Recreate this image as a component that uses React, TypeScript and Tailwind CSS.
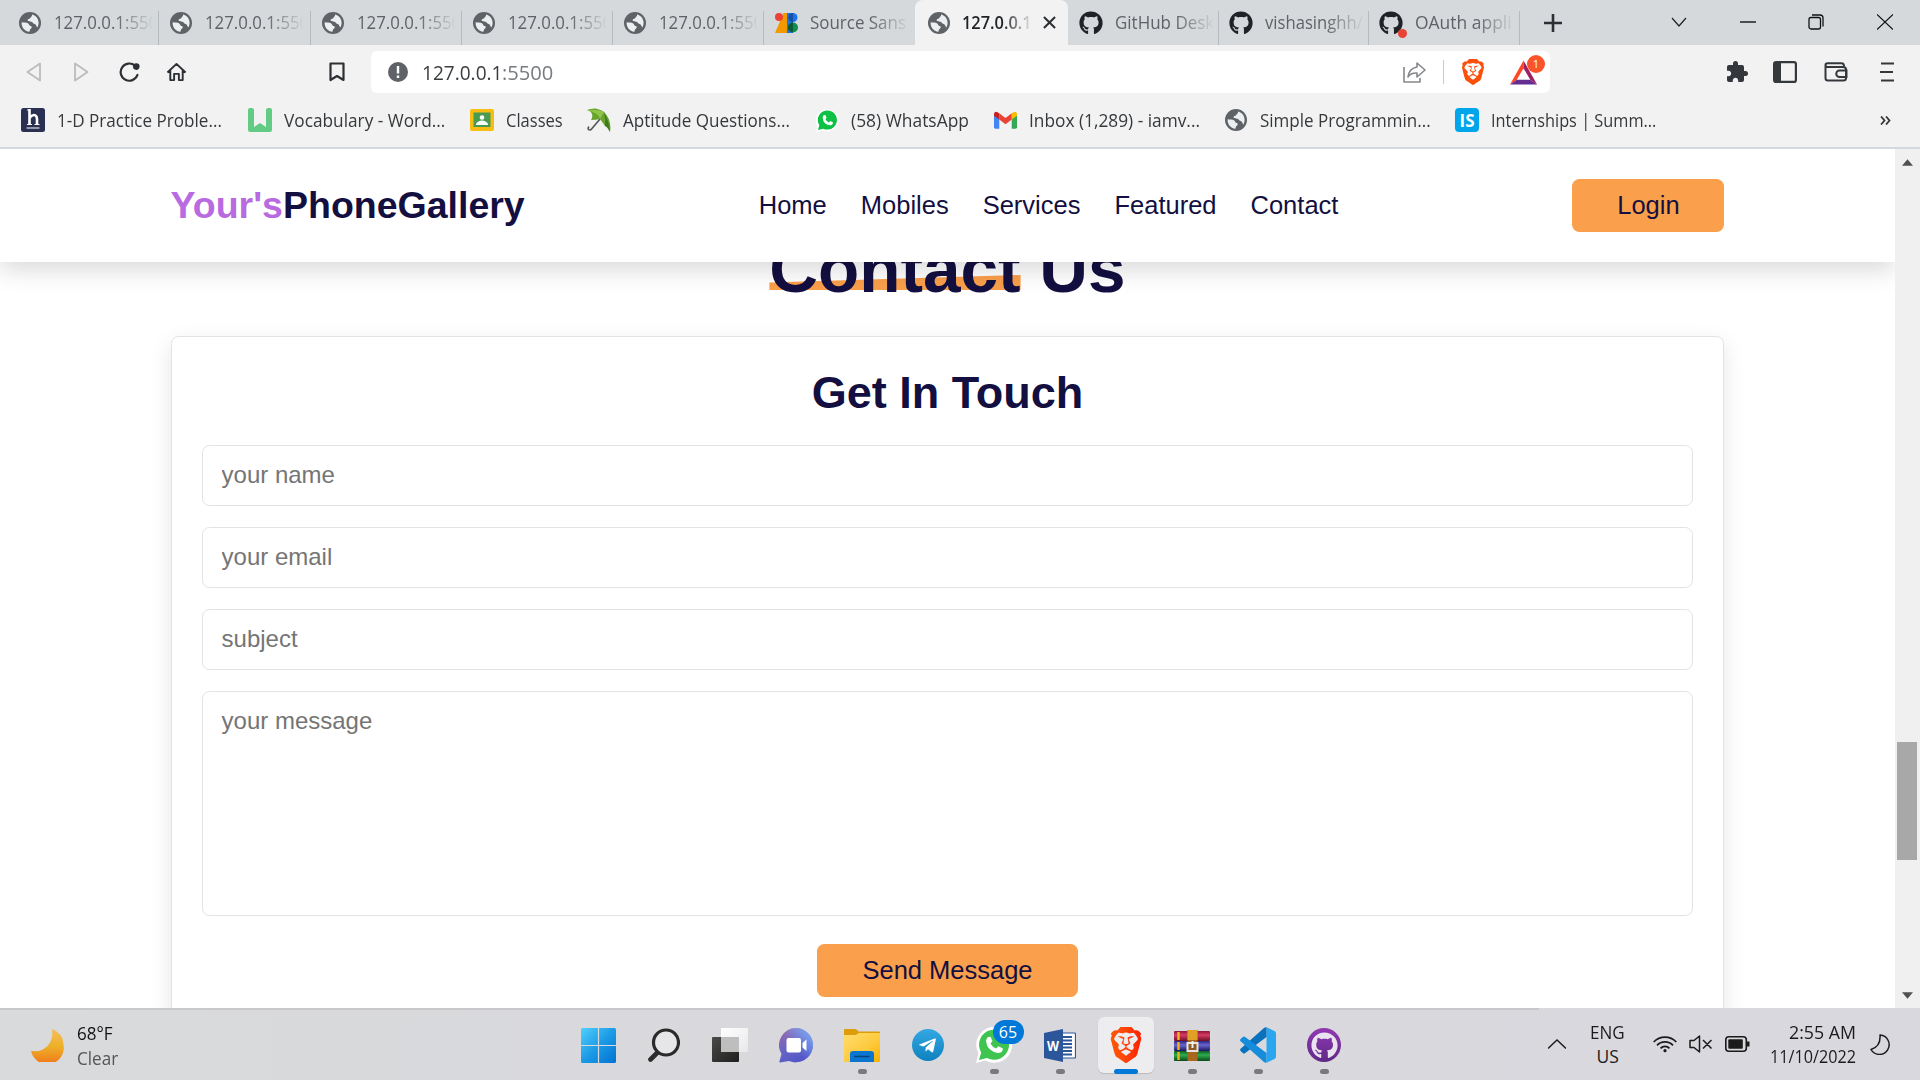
import { useLayoutEffect, useRef, useState } from "react";
import type { ReactNode } from "react";
import { FaGithub, FaTelegramPlane } from "react-icons/fa";
import { SiBrave } from "react-icons/si";
import { MdExtension } from "react-icons/md";

/** Single-line label that is condensed or widened to an exact width. */
function Fit({ text, width, className = "" }: { text: string; width: number; className?: string }) {
  const ref = useRef<HTMLSpanElement>(null);
  const [scale, setScale] = useState(1);
  useLayoutEffect(() => {
    if (ref.current) setScale(width / ref.current.offsetWidth);
  }, [width, text]);
  return (
    <span className="block shrink-0 whitespace-nowrap" style={{ width }}>
      <span ref={ref} className={`inline-block origin-left ${className}`} style={{ transform: `scaleX(${scale})` }}>
        {text}
      </span>
    </span>
  );
}

function Globe() {
  return (
    <svg viewBox="0 0 22 22" className="size-[22px] shrink-0">
      <circle cx="11" cy="11" r="11" fill="#5f6368" />
      <path d="M2.6 10.2C4.5 10.8 7.6 10 9.3 11.4C10.4 12.6 10 13.6 11.7 14C13.4 14.3 12.8 16.3 11.5 17C10.5 17.7 11 19 10.4 19.8C5.5 19.3 2.3 15 2.6 10.2Z" fill="#eceeef" />
      <path d="M13.2 2.6C17 3.6 19.6 7 19.6 11C19.5 13 19 14.4 18.2 15.6C17.4 14.3 17.2 12.5 15.6 12C13.8 11.6 14.2 10.4 12.3 9.8C10.4 9.3 8.7 9.8 8.6 8.3C8.6 6.8 10.4 7.2 11 6.2C11.7 5.2 12.9 5 13.2 2.6Z" fill="#eceeef" />
    </svg>
  );
}

function GoogleFonts() {
  return (
    <svg viewBox="0 0 23 22" className="h-[22px] w-[23px] shrink-0">
      <path d="M8.500 1H13V21H0Z" fill="#f29900" />
      <circle cx="4" cy="5" r="4" fill="#ea4335" />
      <path d="M12 1H18V21H12Z" fill="#1a73e8" />
      <circle cx="18" cy="5.500" r="4.500" fill="#1a73e8" />
      <circle cx="18" cy="15.500" r="5" fill="#0d904f" />
      <path d="M18 1V10A4.500 4.500 0 0 1 18 1Z" fill="#174ea6" />
      <path d="M18 10.500V20.500A5 5 0 0 1 18 10.500Z" fill="#0d5a3a" />
    </svg>
  );
}

function GitHubDot() {
  return (
    <span className="relative shrink-0">
      <FaGithub className="size-6 text-[#1f2328]" />
      <span className="absolute -right-1 -bottom-[3px] size-[9px] rounded-full bg-[#ea4335]" />
    </span>
  );
}

type TabData = { icon: ReactNode; label: string; w: number; active?: boolean; noLine?: boolean; late?: boolean };

const local: TabData = { icon: <Globe />, label: "127.0.0.1:5500", w: 114 };
const github = <FaGithub className="size-6 shrink-0 text-[#1f2328]" />;
const tabs: TabData[] = [
  local,
  local,
  local,
  local,
  local,
  { icon: <GoogleFonts />, label: "Source Sans", w: 96, noLine: true },
  { icon: <Globe />, label: "127.0.0.1", w: 70, active: true, noLine: true },
  { icon: github, label: "GitHub Desk", w: 99, late: true },
  { icon: github, label: "vishasinghh/", w: 98, late: true },
  { icon: <GitHubDot />, label: "OAuth appli", w: 97, late: true },
];

function Tab({ t }: { t: TabData }) {
  if (t.active) {
    return (
      <div className="flex h-full w-[153px] shrink-0 items-center rounded-t-lg bg-[#f2f2f2] pl-[13px]">
        {t.icon}
        <div className="ml-3 w-[68px] overflow-hidden [mask-image:linear-gradient(to_right,#000_60%,rgba(0,0,0,0.1))]">
          <Fit text={t.label} width={t.w} className="text-[18px] font-semibold text-[#1f2328]" />
        </div>
        <svg viewBox="0 0 14 14" className="ml-[13px] size-[13px]" stroke="#2c2f33" strokeWidth="2.2">
          <path d="M1 1L13 13M13 1L1 13" />
        </svg>
      </div>
    );
  }
  return (
    <div className={`relative flex h-full shrink-0 items-center pl-[11px] ${t.late ? "w-[150.3px]" : "w-[151.3px]"}`}>
      <div className="flex w-[24px] justify-center">{t.icon}</div>
      <div className="ml-3 w-[98px] overflow-hidden [mask-image:linear-gradient(to_right,#000_62%,rgba(0,0,0,0.05))]">
        <Fit text={t.label} width={t.w} className="text-[18px] text-[#5f6367]" />
      </div>
      {!t.noLine && <span className="absolute -right-px bottom-0 h-[34px] w-px bg-[#b5babe]" />}
    </div>
  );
}

function TabStrip() {
  return (
    <div className="flex h-[45px] bg-[#d5d9dc] pl-[7px]">
      {tabs.map((t, i) => (
        <Tab key={i} t={t} />
      ))}
      <div className="flex flex-1 items-center pl-[25px]">
        <svg viewBox="0 0 18 18" className="size-[18px]" stroke="#2c2f33" strokeWidth="2.6">
          <path d="M9 0V18M0 9H18" />
        </svg>
      </div>
      <div className="flex items-center pr-[27px] pb-[2px]">
        <svg viewBox="0 0 16 12" className="mr-[53px] h-3 w-4" fill="none" stroke="#222" strokeWidth="1.2">
          <path d="M1 2L8 10L15 2" />
        </svg>
        <svg viewBox="0 0 16 16" className="mr-[52px] size-4" stroke="#111" strokeWidth="1.4">
          <path d="M0 8H16" />
        </svg>
        <svg viewBox="0 0 16 16" className="mr-[53px] size-4" fill="none" stroke="#111" strokeWidth="1.3">
          <rect x="1" y="3.5" width="11.5" height="11.5" rx="2" />
          <path d="M4 1H12A3 3 0 0 1 15 4V12.500" />
        </svg>
        <svg viewBox="0 0 16 16" className="size-4" stroke="#111" strokeWidth="1.2">
          <path d="M0 0.500L16 15.500M16 0.500L0 15.500" />
        </svg>
      </div>
    </div>
  );
}

function Toolbar() {
  return (
    <div className="flex h-[54px] items-center bg-[#f2f2f2]">
      <svg viewBox="0 0 16 20" className="ml-[26px] h-5 w-4" fill="none" stroke="#b9bbbd" strokeWidth="1.8" strokeLinejoin="round">
        <path d="M14 1.500V18.500L1.500 10Z" />
      </svg>
      <svg viewBox="0 0 16 20" className="ml-[31px] h-5 w-4" fill="none" stroke="#b9bbbd" strokeWidth="1.8" strokeLinejoin="round">
        <path d="M2 1.500V18.500L14.500 10Z" />
      </svg>
      <svg viewBox="0 0 22 20" className="ml-[30px] h-5 w-[22px]" fill="none" stroke="#2c2f33" strokeWidth="2.2" strokeLinecap="round">
        <path d="M18.400 13A8.600 8.600 0 1 1 16 3.700" />
        <circle cx="17.300" cy="4.600" r="2.200" fill="#2c2f33" />
      </svg>
      <svg viewBox="0 0 22 20" className="ml-[25px] h-5 w-[21px]" fill="none" stroke="#2c2f33" strokeWidth="2" strokeLinejoin="round">
        <path d="M1.500 10.500L11 1.500L20.500 10.500M4.500 8.500V18.500H8.500V12H13.500V18.500H17.500V8.500" />
      </svg>
      <svg viewBox="0 0 16 20" className="ml-[142px] h-5 w-4" fill="none" stroke="#2c2f33" strokeWidth="2.200" strokeLinejoin="round">
        <path d="M1.500 1.500H14.500V18L8 14L1.500 18Z" />
      </svg>
      <div className="ml-[26px] flex h-[42px] w-[1179px] items-center rounded-md bg-white pl-[17px]">
        <svg viewBox="0 0 20 20" className="size-5">
          <circle cx="10" cy="10" r="10" fill="#5f6368" />
          <path d="M10 4V11.500M10 13.500V16" stroke="#fff" strokeWidth="2.400" />
        </svg>
        <span className="ml-[14px] flex">
          <Fit text="127.0.0.1" width={80} className="text-[20.5px] text-[#3a3d40]" />
          <Fit text=":5500" width={51} className="text-[20.5px] text-[#777b7f]" />
        </span>
        <svg viewBox="0 0 23 21" className="ml-auto h-[21px] w-[23px]" fill="none" stroke="#85888b" strokeWidth="1.600" strokeLinejoin="round">
          <path d="M1 5V20H17V16" />
          <path d="M14 1L22 8L14 15V11Q8 10.500 5 15Q6 6.500 14 5Z" />
        </svg>
        <span className="ml-[17px] h-6 w-px bg-[#c9cbcd]" />
        <span className="ml-4 flex rounded-[10px] bg-white">
          <SiBrave className="h-[28px] w-[26px] text-[#fb4f0a]" />
        </span>
        <span className="relative mr-[13px] ml-[24px] h-7 w-[27px]">
          <svg viewBox="0 0 28 25" className="mt-[2px] h-[25px] w-[27px]">
            <path d="M14 0L0 25L7 20L14 8Z" fill="#ff4724" />
            <path d="M14 0L28 25L21 20L14 8Z" fill="#9e1f63" />
            <path d="M0 25H28L21 20H7Z" fill="#662d91" />
          </svg>
          <span className="absolute -top-[3px] -right-[8px] flex size-[18px] items-center justify-center rounded-full bg-[#fb542b] text-[11px] text-white">1</span>
        </span>
      </div>
      <MdExtension className="ml-[175px] size-[24px] text-[#34383c]" />
      <svg viewBox="0 0 24 22" className="ml-[24px] h-[22px] w-6">
        <rect x="1.100" y="1.100" width="21.800" height="19.800" rx="2" fill="none" stroke="#34383c" strokeWidth="2.200" />
        <rect x="1" y="1" width="7" height="20" fill="#34383c" />
      </svg>
      <svg viewBox="0 0 24 20" className="ml-[27px] h-5 w-6" fill="none" stroke="#34383c" strokeWidth="2">
        <path d="M1.500 3V16Q1.500 18.500 4 18.500H19.500Q22 18.500 22 16V7.500Q22 5 19.500 5H3.500Q1.500 5 1.500 3Q1.500 1.200 3.500 1.200H17.500Q20 1.200 20 4" />
        <path d="M22.500 8.500H15.500A3.200 3.200 0 0 0 15.500 15H22.500Z" />
      </svg>
      <svg viewBox="0 0 14 20" className="ml-[32px] h-5 w-[14px]" stroke="#34383c" strokeWidth="2.200">
        <path d="M1 1.500H14M0 10H13M1 18.500H14" />
      </svg>
    </div>
  );
}

const bookmarks: { icon: ReactNode; label: string; w: number; slot: string }[] = [
  {
    icon: (
      <svg viewBox="0 0 24 24" className="size-6" fill="none" stroke="#fff">
        <rect width="24" height="24" rx="2.500" fill="#2a3052" stroke="none" />
        <path d="M8.500 1V16M9 9.500Q12 6 14.500 7.500Q16 8.500 16 11V16" strokeWidth="2.600" />
        <path d="M6 2H9M6 16.500H11M13.500 16.500H18.500M5.500 20H18.500" strokeWidth="1.200" />
      </svg>
    ),
    label: "1-D Practice Proble...",
    w: 165,
    slot: "w-[227px]",
  },
  {
    icon: (
      <svg viewBox="0 0 24 24" className="size-6">
        <path d="M0 2Q0 0 2 0H4Q6 0 6 2V19L12 15L18 19V2Q18 0 20 0H22Q24 0 24 2V22Q24 24 22 24H2Q0 24 0 22Z" fill="#62cc84" />
      </svg>
    ),
    label: "Vocabulary - Word...",
    w: 161,
    slot: "w-[222px]",
  },
  {
    icon: (
      <svg viewBox="0 0 24 22" className="h-[22px] w-6">
        <rect width="24" height="22" rx="2" fill="#f8bd12" />
        <rect x="3.500" y="3.500" width="17" height="14.500" fill="#4a9b52" />
        <circle cx="12" cy="8.500" r="2.300" fill="#fff" />
        <path d="M6 15Q8 11.500 12 11.500Q16 11.500 18 15V16H6Z" fill="#fff" />
      </svg>
    ),
    label: "Classes",
    w: 57,
    slot: "w-[117px]",
  },
  {
    icon: (
      <svg viewBox="0 0 24 24" className="size-6">
        <path d="M13 11L5 20.500Q3 23 1.500 21.500Q.5 20 2 18.500" stroke="#555" strokeWidth="1.600" fill="none" />
        <path d="M0 2Q9-2 17 4Q25 12 23 24Q20 18 18 18L13 11Q9 12 4 12Q6 9 5 6Q4 3 0 2Z" fill="#68a32c" />
        <path d="M0 2Q11 1 17 4L13 11Q12 5 0 2Z" fill="#8ec549" />
        <path d="M17 4Q22 13 23 24Q20 18 18 18Q19 11 17 4Z" fill="#3f7a1c" />
      </svg>
    ),
    label: "Aptitude Questions...",
    w: 167,
    slot: "w-[228px]",
  },
  {
    icon: (
      <svg viewBox="0 0 24 24" className="size-[23px]">
        <path d="M0 24L1.500 18A12 11.500 0 1 1 7 22.500Z" fill="#fff" />
        <path d="M2 22L3.500 17A10 10 0 1 1 7.500 20.500Z" fill="#0cc143" />
        <path d="M8 6.500L9.800 6.300L11 9.200L9.800 10.800Q11 13 13.300 14L15 12.500L17.800 14Q17.500 17 14.500 17Q7.500 16 7 9Q7 7.500 8 6.500Z" fill="#fff" />
      </svg>
    ),
    label: "(58) WhatsApp",
    w: 118,
    slot: "w-[178px]",
  },
  {
    icon: (
      <svg viewBox="0 0 24 18" className="h-[18px] w-[23px]">
        <path d="M0 2V16.500Q0 18 1.500 18H5.500V6Z" fill="#4285f4" />
        <path d="M24 2V16.500Q24 18 22.500 18H18.500V6Z" fill="#34a853" />
        <path d="M5.500 2L12 7L18.500 2V8.500L12 13.500L5.500 8.500Z" fill="#ea4335" />
        <path d="M0 2.500Q1-1.500 5.500 2V8.500L0 4.500Z" fill="#c5221f" />
        <path d="M24 2.500Q23-1.500 18.500 2V8.500L24 4.500Z" fill="#fbbc04" />
      </svg>
    ),
    label: "Inbox (1,289) - iamv...",
    w: 171,
    slot: "w-[231px]",
  },
  { icon: <Globe />, label: "Simple Programmin...", w: 171, slot: "w-[231px]" },
  {
    icon: <span className="flex size-6 items-center justify-center rounded-[4px] bg-[#00a5ec] text-[17px] leading-none font-bold text-white">IS</span>,
    label: "Internships | Summ...",
    w: 165,
    slot: "w-[210px]",
  },
];

function Bookmarks() {
  return (
    <div className="flex h-[50px] items-center border-b-2 border-[#d3d9de] bg-[#f2f2f2] pr-[29px] pb-[6px] pl-[21px]">
      {bookmarks.map((b) => (
        <div key={b.label} className={`flex shrink-0 items-center ${b.slot}`}>
          <span className="mr-3 flex w-6 shrink-0 justify-center">{b.icon}</span>
          <Fit text={b.label} width={b.w} className="text-[18px] text-[#36393c]" />
        </div>
      ))}
      <svg viewBox="0 0 11 9" className="ml-auto h-[9px] w-[11px]" fill="none" stroke="#34383c" strokeWidth="1.800">
        <path d="M1 .5L4.500 4.500L1 8.500M6 .5L9.500 4.500L6 8.500" />
      </svg>
    </div>
  );
}

const fieldClass =
  "block w-full resize-none rounded-[7.5px] border border-[#e3e3e4] bg-white px-[19px] text-[24px] text-[#140f40] outline-none placeholder:text-[#757575] placeholder:opacity-100";

function Page() {
  return (
    <div className="flex h-[859px] overflow-hidden bg-white font-['Liberation_Sans',sans-serif] text-[#130f40]">
      <main className="flex w-[1895px] flex-col overflow-hidden">
        <header className="relative z-10 flex h-[113px] shrink-0 items-center justify-between bg-white px-[9%] shadow-[0_7.5px_22.5px_rgba(0,0,0,0.15)]">
          <div className="text-[37.5px] leading-none font-bold">
            <span className="text-[#b86ae0]">Your's</span>PhoneGallery
          </div>
          <nav className="flex gap-[34px] text-[25.5px]">
            {["Home", "Mobiles", "Services", "Featured", "Contact"].map((n) => (
              <a key={n}>{n}</a>
            ))}
          </nav>
          <button className="h-[53px] w-[152px] rounded-[7.5px] bg-[#fa9f4b] text-[25.5px]">Login</button>
        </header>
        <section className="flex grow flex-col px-[9%]">
          <h1 className="relative z-0 -mt-8 h-[106px] shrink-0 text-center text-[67.5px] leading-[78px] font-bold">
            <span className="relative inline-block">
              Contact
              <span className="absolute bottom-[18px] left-0 -z-10 h-[15px] w-full bg-[#fa9f4b] [clip-path:polygon(0_50%,100%_0,100%_100%,0_100%)]" />
            </span>{" "}
            Us
          </h1>
          <form className="-mb-24 h-[780px] shrink-0 rounded-[7.5px] border border-[#e3e3e4] bg-white px-[30px] shadow-[0_7.5px_22.5px_rgba(0,0,0,0.1)]">
            <h3 className="mt-[30px] mb-[26px] text-center text-[45px] leading-[52px] font-bold">Get In Touch</h3>
            <div className="flex flex-col gap-[21px]">
              <input className={`h-[61px] pb-[2px] ${fieldClass}`} placeholder="your name" />
              <input className={`h-[61px] pb-[2px] ${fieldClass}`} placeholder="your email" />
              <input className={`h-[61px] pb-[2px] ${fieldClass}`} placeholder="subject" />
              <textarea className={`h-[225px] pt-[15px] leading-[28px] ${fieldClass}`} placeholder="your message" />
            </div>
            <button type="button" className="mx-auto mt-7 block h-[53px] w-[261px] rounded-[7.5px] bg-[#fa9f4b] text-[25.5px]">
              Send Message
            </button>
          </form>
        </section>
      </main>
      <div className="flex w-[25px] flex-col items-center bg-[#f0f0f0]">
        <svg viewBox="0 0 12 7" className="mt-[10px] h-[7px] w-[11px]">
          <path d="M6 0L12 7H0Z" fill="#505050" />
        </svg>
        <div className="mt-[576px] mr-px h-[118px] w-5 bg-[#a8a8a8]" />
        <svg viewBox="0 0 12 7" className="mt-auto mb-[9px] h-[7px] w-[11px]">
          <path d="M6 7L12 0H0Z" fill="#505050" />
        </svg>
      </div>
    </div>
  );
}

function WindowsIcon() {
  return (
    <svg viewBox="0 0 35 35" className="size-[35px]">
      <defs>
        <linearGradient id="win" x1="0" y1="0" x2="35" y2="35" gradientUnits="userSpaceOnUse">
          <stop stopColor="#50d0fd" />
          <stop offset=".5" stopColor="#1c9be6" />
          <stop offset="1" stopColor="#0072d3" />
        </linearGradient>
      </defs>
      <path d="M1.500 0H16.900V16.900H0V1.500Q0 0 1.500 0ZM18.100 0H33.500Q35 0 35 1.500V16.900H18.100ZM0 18.100H16.900V35H1.500Q0 35 0 33.500ZM18.100 18.100H35V33.500Q35 35 33.500 35H18.100Z" fill="url(#win)" />
    </svg>
  );
}

function SearchIcon() {
  return (
    <svg viewBox="0 0 32 34" className="h-[34px] w-8" fill="none" stroke="#2a2a2a">
      <path d="M10.500 23.500L2.500 31.500" strokeWidth="4.600" strokeLinecap="round" />
      <circle cx="18" cy="14.500" r="12.500" strokeWidth="3.200" fill="#e6e6e8" />
    </svg>
  );
}

function TaskViewIcon() {
  return (
    <svg viewBox="0 0 36 34" className="h-[34px] w-9">
      <defs>
        <linearGradient id="tv" x1="0" y1="0" x2="1" y2="1">
          <stop stopColor="#4a4a48" />
          <stop offset="1" stopColor="#1e1e1e" />
        </linearGradient>
        <linearGradient id="tw" x1="0" y1="0" x2="1" y2="1">
          <stop stopColor="#fff" />
          <stop offset="1" stopColor="#e8e8ea" />
        </linearGradient>
      </defs>
      <rect x="9" y="0" width="27" height="24" rx="1" fill="url(#tw)" />
      <rect x="0" y="9" width="27" height="25" rx="1" fill="url(#tv)" />
      <rect x="9" y="9" width="18" height="15" fill="#bebebe" />
    </svg>
  );
}

function ChatIcon() {
  return (
    <svg viewBox="0 0 35 35" className="size-[35px]">
      <defs>
        <linearGradient id="chat" x1=".1" y1="0" x2=".7" y2="1">
          <stop stopColor="#9a6ba8" />
          <stop offset=".55" stopColor="#6463c8" />
          <stop offset="1" stopColor="#5153c6" />
        </linearGradient>
        <linearGradient id="chat2" x1="1" y1="0" x2=".4" y2=".5">
          <stop stopColor="#7db4ff" />
          <stop offset="1" stopColor="#7db4ff" stopOpacity="0" />
        </linearGradient>
      </defs>
      <path d="M17.500 0A17.200 17.200 0 1 1 10 33L1 34.500Q0 34.500 .5 33L2.500 26A17.200 17.200 0 0 1 17.500 0Z" fill="url(#chat)" />
      <path d="M17.500 0A17.200 17.200 0 1 1 10 33L1 34.500Q0 34.500 .5 33L2.500 26A17.200 17.200 0 0 1 17.500 0Z" fill="url(#chat2)" />
      <rect x="7.500" y="10" width="14.500" height="14.500" rx="2" fill="#fff" />
      <path d="M23.500 15L27.500 11.500V23L23.500 19.500Z" fill="#fff" />
    </svg>
  );
}

function FolderIcon() {
  return (
    <svg viewBox="0 0 36 33" className="h-[33px] w-9">
      <defs>
        <linearGradient id="fold" x1="0" y1="0" x2="1" y2="1">
          <stop stopColor="#ffdc6e" />
          <stop offset=".6" stopColor="#fdc93b" />
          <stop offset="1" stopColor="#f8b100" />
        </linearGradient>
      </defs>
      <path d="M0 1Q0 0 1 0H11Q13 0 14.500 2.500H35Q36 2.500 36 3.500V10H0Z" fill="#dd9c0a" />
      <path d="M0 6H11Q13 6 14.500 4H36V32Q36 33 35 33H1Q0 33 0 32Z" fill="url(#fold)" />
      <path d="M6 33V25Q6 22 9 22H27Q30 22 30 25V33Z" fill="#0b76cf" />
      <path d="M11 27.500H25" stroke="#07427e" strokeWidth="1.600" strokeLinecap="round" />
    </svg>
  );
}

function WhatsAppIcon() {
  return (
    <span className="relative">
      <svg viewBox="0 0 36 36" className="-ml-px size-9">
        <path d="M0 36L2.500 26.500A18 18 0 1 1 9.500 33.500Z" fill="#fff" />
        <path d="M3 33L5.200 25.500A15 15 0 1 1 11 31Z" fill="#3fc450" />
        <path d="M12 10L14.500 9.800L16.500 14L14.500 16.800Q16.500 20 20 21.500L22.500 19.200L27 21.500Q26.500 26 22 26Q11 24 10 14Q10.200 11.500 12 10Z" fill="#fff" />
      </svg>
      <span className="absolute -top-[7px] -right-[12px] flex h-6 w-[31px] items-center justify-center rounded-full bg-[#0078d7] text-[16px] text-white">65</span>
    </span>
  );
}

function WordIcon() {
  return (
    <svg viewBox="0 0 32 33" className="h-[33px] w-8">
      <rect x="15" y="4" width="16.500" height="25" rx="1" fill="#fff" stroke="#2b579a" strokeWidth="1.200" />
      <path d="M19 8H28M19 11.500H28M19 15H28M19 18.500H28M19 22H28M19 25.500H28" stroke="#2b579a" strokeWidth="1.800" />
      <path d="M0 4L19 0V33L0 29Z" fill="#2b579a" />
      <text x="9" y="22" textAnchor="middle" fill="#fff" fontSize="15" fontWeight="700" fontFamily="Open Sans, sans-serif" textLength="12" lengthAdjust="spacingAndGlyphs">W</text>
    </svg>
  );
}

function BraveIcon() {
  return (
    <span className="flex">
      <svg width="0" height="0" className="absolute">
        <defs>
          <linearGradient id="brave" x1="0" y1="0" x2="1" y2="0">
            <stop stopColor="#ff5500" />
            <stop offset=".4" stopColor="#ff4a0c" />
            <stop offset="1" stopColor="#ff2000" />
          </linearGradient>
        </defs>
      </svg>
      <SiBrave className="size-9" style={{ fill: "url(#brave)" }} />
    </span>
  );
}

function WinrarIcon() {
  return (
    <svg viewBox="0 0 36 31" className="h-[31px] w-9">
      <defs>
        <linearGradient id="ra" x1="0" y1="0" x2="0" y2="1">
          <stop stopColor="#8c1636" />
          <stop offset=".4" stopColor="#d63b63" />
          <stop offset="1" stopColor="#6d0f28" />
        </linearGradient>
        <linearGradient id="rb" x1="0" y1="0" x2="0" y2="1">
          <stop stopColor="#2a2480" />
          <stop offset=".4" stopColor="#6a66d0" />
          <stop offset="1" stopColor="#1b1660" />
        </linearGradient>
        <linearGradient id="rc" x1="0" y1="0" x2="0" y2="1">
          <stop stopColor="#0c5c22" />
          <stop offset=".4" stopColor="#2fae4c" />
          <stop offset="1" stopColor="#08481a" />
        </linearGradient>
      </defs>
      <rect width="36" height="10" y="1" rx="1" fill="url(#ra)" />
      <rect width="36" height="10" y="11" rx="1" fill="url(#rb)" />
      <rect width="36" height="10" y="21" rx="1" fill="url(#rc)" />
      <path d="M4.500 2V10M4.500 12V20M4.500 22V30" stroke="#f0b51c" strokeWidth="2.400" />
      <rect x="13.500" y="0" width="10" height="31" fill="#a9661f" />
      <rect x="13.500" y="0" width="10" height="10" fill="#dfa024" />
      <rect x="13.500" y="13" width="10" height="8" fill="#8a5a2a" stroke="#e8e4da" strokeWidth="2" />
      <path d="M18.500 11V18" stroke="#eee" strokeWidth="2" />
    </svg>
  );
}

function CodeIcon() {
  return (
    <svg viewBox="0 0 36 36" className="size-9">
      <path d="M26.500 .3L34.500 4Q36 4.800 36 6.500V29.500Q36 31.200 34.500 32L26.500 35.700Z" fill="#2aa5f0" />
      <path d="M26.500 .3V10L5.200 26Q4 27 2.800 26L.6 24Q-.5 22.800 .6 21.700L24 1Q25.300 0 26.500 .3Z" fill="#0a72bd" />
      <path d="M26.500 35.700V26L5.200 10Q4 9 2.800 10L.6 12Q-.5 13.200 .6 14.300L24 35Q25.300 36 26.500 35.700Z" fill="#168ddb" />
    </svg>
  );
}

const apps: { icon: ReactNode; run?: boolean; active?: boolean }[] = [
  { icon: <WindowsIcon /> },
  { icon: <SearchIcon /> },
  { icon: <TaskViewIcon /> },
  { icon: <ChatIcon /> },
  { icon: <FolderIcon />, run: true },
  {
    icon: (
      <span className="flex size-8 items-center justify-center rounded-full bg-linear-to-b from-[#33a8e3] to-[#0b82bf]">
        <FaTelegramPlane className="mr-[2px] size-[19px] text-white" />
      </span>
    ),
  },
  { icon: <WhatsAppIcon />, run: true },
  { icon: <WordIcon />, run: true },
  { icon: <BraveIcon />, active: true },
  { icon: <WinrarIcon />, run: true },
  { icon: <CodeIcon />, run: true },
  {
    icon: (
      <span className="flex size-[34px] items-center justify-center rounded-full bg-linear-to-b from-[#9238b4] to-[#5f2a86]">
        <FaGithub className="size-[27px] text-[#e9e4ef]" />
      </span>
    ),
    run: true,
  },
];

function Taskbar() {
  return (
    <footer className="flex h-[72px] bg-linear-to-r from-[#d9dadc] to-[#d9d8de] text-[#1b1b1b]">
      <div className="flex flex-1 border-t-2 border-[#c8c8ca]">
        <div className="flex w-[565px] shrink-0 items-center pl-[31px]">
          <svg viewBox="0 0 34 34" className="size-[33px]">
            <defs>
              <linearGradient id="moon" x1="0" y1="0" x2="0" y2="1">
                <stop stopColor="#f5bd5e" />
                <stop offset=".5" stopColor="#edb127" />
                <stop offset="1" stopColor="#f0761b" />
              </linearGradient>
            </defs>
            <path d="M21.500 0Q33 4 33.500 16A17 17 0 0 1 0 22.500Q10 24.500 17 17.500Q23.500 10 21.500 0Z" fill="url(#moon)" />
          </svg>
          <div className="mt-px ml-[13px] leading-6">
            <Fit text="68°F" width={36} className="text-[17.5px] text-[#111]" />
            <Fit text="Clear" width={41} className="text-[17.5px] text-[#555]" />
          </div>
        </div>
        {apps.map((a, i) => (
          <div key={i} className="flex w-[66px] shrink-0 justify-center">
            <div className={`relative mt-[7px] flex h-14 w-14 items-center justify-center rounded-md ${a.active ? "bg-[#ededef] shadow-[0_1px_1px_#bbb]" : ""}`}>
              {a.icon}
              {a.run && <span className="absolute -bottom-px h-[5px] w-[9px] rounded-full bg-[#7a7a7c]" />}
              {a.active && <span className="absolute -bottom-px h-[5px] w-6 rounded-full bg-[#0078d7]" />}
            </div>
          </div>
        ))}
      </div>
      <div className="flex w-[381px] items-center pl-[9px]">
        <svg viewBox="0 0 18 10" className="h-[10px] w-[18px]" fill="none" stroke="#1b1b1b" strokeWidth="1.400">
          <path d="M0 9.500L9 1L18 9.500" />
        </svg>
        <div className="mt-[2px] ml-[24px] flex flex-col items-center leading-[23px]">
          <Fit text="ENG" width={35} className="text-[17.5px]" />
          <Fit text="US" width={22} className="text-[17.5px]" />
        </div>
        <svg viewBox="0 0 24 18" className="ml-[28px] h-[18px] w-6" fill="none" stroke="#1b1b1b" strokeWidth="1.700">
          <path d="M.7 7A15.500 15.500 0 0 1 23.300 7M4 10.300A11 11 0 0 1 20 10.300M7.500 13.300A6.400 6.400 0 0 1 16.500 13.300" />
          <circle cx="12" cy="15.700" r="1.600" fill="#1b1b1b" stroke="none" />
        </svg>
        <svg viewBox="0 0 24 18" className="ml-3 h-[18px] w-6" fill="none" stroke="#1b1b1b" strokeWidth="1.500" strokeLinejoin="round">
          <path d="M1 5.500H5L10.500 1V17L5 12.500H1ZM14 5L22.500 13.500M22.500 5L14 13.500" />
        </svg>
        <svg viewBox="0 0 25 16" className="ml-3 h-4 w-[25px]">
          <rect x=".8" y=".8" width="20.500" height="14.400" rx="3" fill="none" stroke="#1b1b1b" strokeWidth="1.600" />
          <rect x="3.300" y="3.300" width="14.500" height="9.400" rx="1" fill="#1b1b1b" />
          <path d="M22 5.500H24.500V10.500H22Z" fill="#1b1b1b" />
        </svg>
        <div className="mt-px ml-auto flex flex-col items-end leading-[23px]">
          <Fit text="2:55 AM" width={67} className="text-[17.5px]" />
          <Fit text="11/10/2022" width={86} className="text-[17.5px]" />
        </div>
        <svg viewBox="0 0 20 21" className="mr-[30px] ml-[14px] h-[21px] w-5" fill="none" stroke="#1b1b1b" strokeWidth="1.500" strokeLinejoin="round">
          <path d="M10 1A9.700 9.700 0 1 1 1 15.500Q11 12.500 10 1Z" />
        </svg>
      </div>
    </footer>
  );
}

export default function App() {
  return (
    <div className="h-[1080px] w-[1920px] overflow-hidden bg-white font-['Open_Sans',sans-serif]">
      <TabStrip />
      <Toolbar />
      <Bookmarks />
      <Page />
      <Taskbar />
    </div>
  );
}
